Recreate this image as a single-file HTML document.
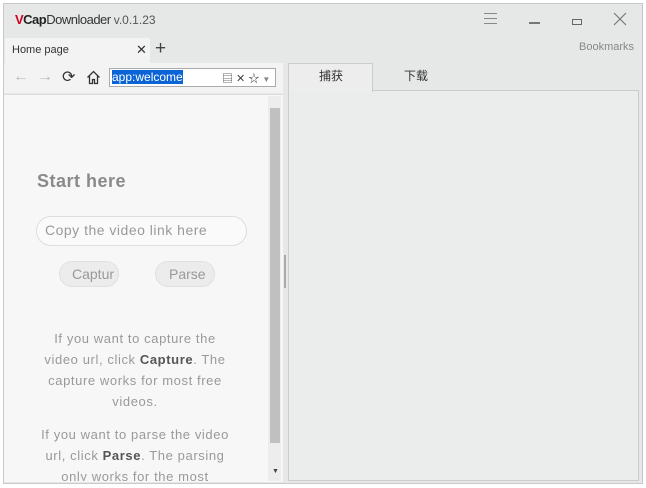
<!DOCTYPE html>
<html><head><meta charset="utf-8"><style>
*{margin:0;padding:0;box-sizing:border-box}
body{width:646px;height:488px;background:#fff;position:relative;overflow:hidden;font-family:"Liberation Sans","Noto Sans CJK SC",sans-serif}
.a{position:absolute}
</style></head><body>
<div class="a" style="left:3px;top:3px;width:640px;height:481px;background:#e6e7e7;border:1px solid #c9c9c9"></div>
<div class="a" style="left:15px;top:12px;font-size:13px;letter-spacing:-0.5px;color:#333"><b style="color:#d0021b">V</b><b style="color:#222">Cap</b>Downloader <span style="font-size:12px;color:#555;letter-spacing:0">v.0.1.23</span></div>
<div class="a" style="left:484px;top:13px;width:13px;height:11px;border-top:1px solid #888;border-bottom:1px solid #888"><div style="margin-top:4px;border-top:1px solid #888"></div></div>
<div class="a" style="left:529px;top:22px;width:11px;height:2px;background:#777"></div>
<div class="a" style="left:572px;top:19px;width:10px;height:6px;border:1px solid #666"></div>
<svg class="a" style="left:613px;top:12px" width="14" height="14"><path d="M1 1L13 13M13 1L1 13" stroke="#777" stroke-width="1.2"/></svg>
<div class="a" style="left:5px;top:38px;width:145px;height:25px;background:#f3f3f3"></div>
<div class="a" style="left:12px;top:44px;font-size:11px;color:#333">Home page</div>
<div class="a" style="left:136px;top:42px;font-size:13px;color:#333">✕</div>
<div class="a" style="left:155px;top:38px;font-size:19px;color:#444">+</div>
<div class="a" style="left:579px;top:41px;font-size:11px;color:#888">Bookmarks</div>
<div class="a" style="left:4px;top:63px;width:279px;height:30px;background:#f3f3f3"></div>
<div class="a" style="left:13px;top:68px;font-size:16px;color:#bbb">←</div>
<div class="a" style="left:37px;top:68px;font-size:16px;color:#bbb">→</div>
<div class="a" style="left:62px;top:67px;font-size:16px;color:#333">⟳</div>
<svg class="a" style="left:86px;top:70px" width="15" height="15"><path d="M1.5 7.5L7.5 1.5L13.5 7.5M3.5 6v7.5h3v-4h2v4h3V6" fill="none" stroke="#333" stroke-width="1.3"/></svg>
<div class="a" style="left:109px;top:68px;width:167px;height:19px;border:1px solid #aaa;background:#fff"></div>
<div class="a" style="left:112px;top:70px;height:14px;background:#0a64d6;color:#fff;font-size:12px;line-height:14px">app:welcome</div>
<div class="a" style="left:222px;top:70px;font-size:11px;color:#444">▤ ✕ ☆ <span style="font-size:8px;color:#888">▼</span></div>
<div class="a" style="left:4px;top:94px;width:279px;height:388px;background:#f7f7f7;border-top:1px solid #ddd"></div>
<div class="a" style="left:268px;top:96px;width:13px;height:385px;background:#ededed"></div>
<div class="a" style="left:270px;top:108px;width:10px;height:335px;background:#c0c0c0"></div>
<div class="a" style="left:272px;top:468px;font-size:7px;color:#444">▼</div>
<div class="a" style="left:284px;top:255px;width:2px;height:33px;background:#aaa"></div>
<div class="a" style="left:37px;top:171px;font-size:18px;font-weight:bold;color:#8a8a8a;letter-spacing:0.5px">Start here</div>
<div class="a" style="left:36px;top:216px;width:211px;height:30px;border:1px solid #ddd;border-radius:15px;background:#fafafa"></div>
<div class="a" style="left:45px;top:222px;font-size:14px;color:#9a9a9a;letter-spacing:0.5px">Copy the video link here</div>
<div class="a" style="left:59px;top:261px;width:60px;height:26px;border-radius:13px;background:#ececec;border:1px solid #e0e0e0;overflow:hidden;font-size:14px;color:#999;padding:4px 0 0 12px">Captur</div>
<div class="a" style="left:155px;top:261px;width:60px;height:26px;border-radius:13px;background:#ececec;border:1px solid #e0e0e0;font-size:14px;color:#999;padding:4px 0 0 13px">Parse</div>
<div class="a" style="left:10px;top:328px;width:250px;text-align:center;font-size:13px;line-height:21px;color:#999;letter-spacing:0.6px;white-space:nowrap">If you want to capture the<br>video url, click <b style="color:#555">Capture</b>. The<br>capture works for most free<br>videos.</div>
<div class="a" style="left:10px;top:424px;width:250px;height:57px;overflow:hidden;text-align:center;font-size:13px;line-height:21px;color:#999;letter-spacing:0.6px;white-space:nowrap">If you want to parse the video<br>url, click <b style="color:#555">Parse</b>. The parsing<br>only works for the most</div>
<div class="a" style="left:288px;top:63px;width:85px;height:29px;background:#ecedec;border:1px solid #ccc;border-bottom:none;z-index:2"></div>
<div class="a" style="left:319px;top:67px;font-size:12px;color:#333;z-index:3">捕获</div>
<div class="a" style="left:404px;top:67px;font-size:12px;color:#333">下载</div>
<div class="a" style="left:288px;top:90px;width:351px;height:391px;background:#ebecec;border:1px solid #ccc"></div>
</body></html>
